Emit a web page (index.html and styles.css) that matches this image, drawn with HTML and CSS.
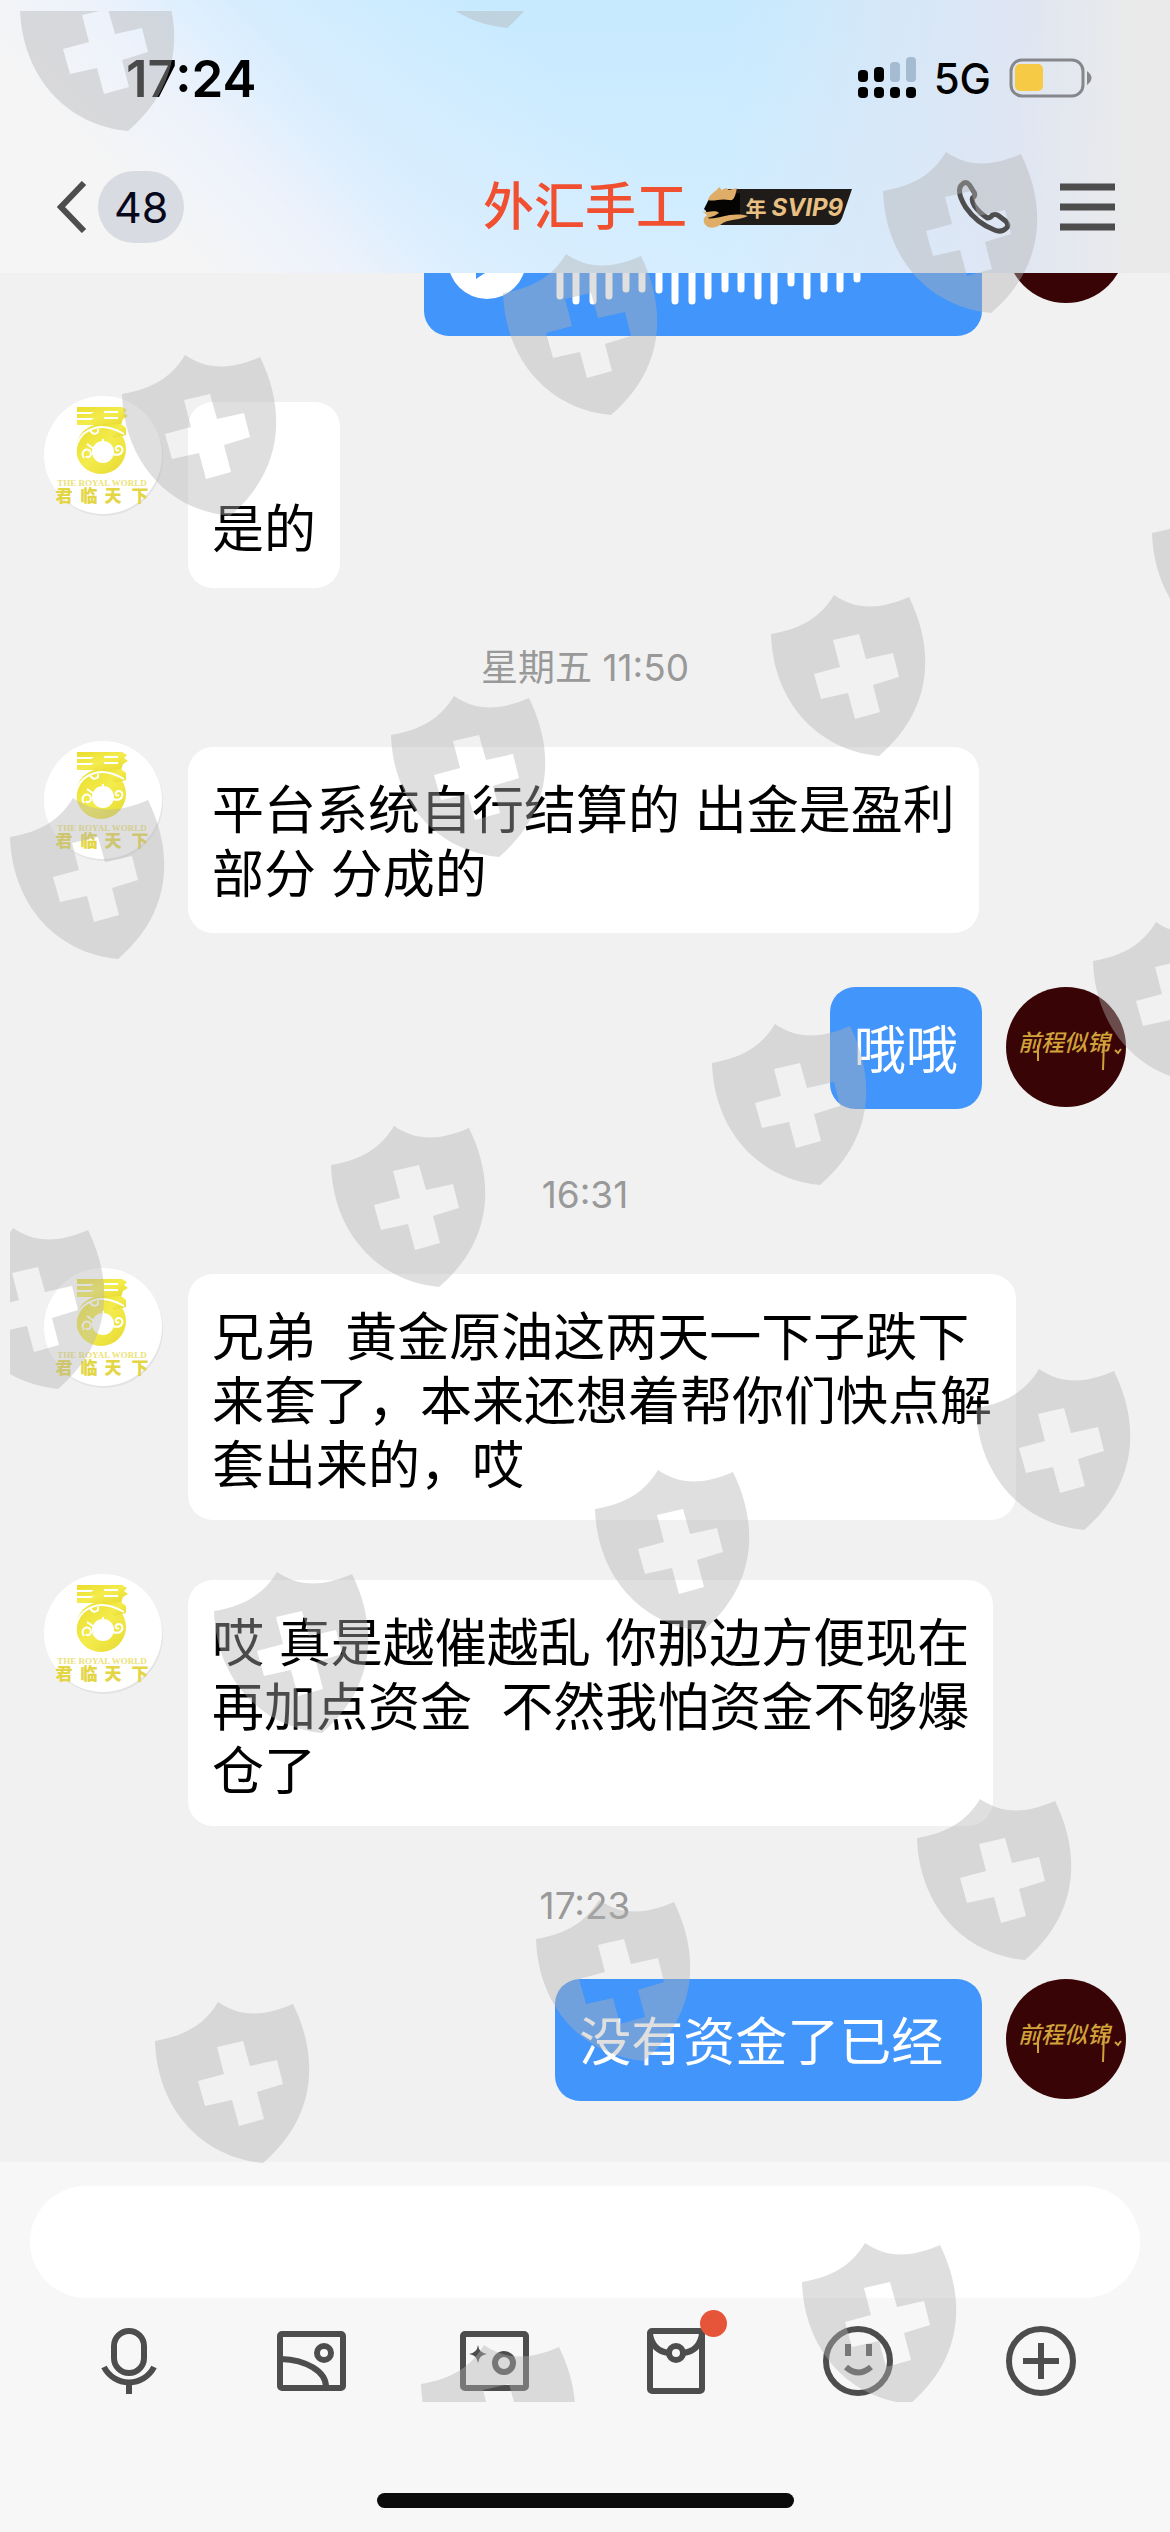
FILE: index.html
```html
<!DOCTYPE html>
<html lang="zh-CN">
<head>
<meta charset="utf-8">
<meta name="viewport" content="width=device-width, initial-scale=1">
<title>外汇手工</title>
<link rel="stylesheet" href="styles.css">
</head>
<body>
<svg class="defs" aria-hidden="true">
  <defs>
    <linearGradient id="gold" x1="0" y1="0" x2="1" y2="1">
      <stop offset="0" stop-color="#e9dc2c"/>
      <stop offset=".5" stop-color="#f4ec4c"/>
      <stop offset="1" stop-color="#e6d931"/>
    </linearGradient>
    <symbol id="shield" viewBox="0 0 156 162">
      <path fill-rule="evenodd" d="M0 39C30 34 50 22 63 0C85 15 108 15 138 2C164 55 162 115 108 161C45 155 2 105 0 39ZM62 45L88 39L95 64L122 58L128 82L102 90L109 117L84 124L77 98L50 104L43 79L69 72Z"/>
    </symbol>
    <symbol id="avatar-peer" viewBox="0 0 120 120">
      <circle cx="60" cy="61" r="59" fill="#e4e4e4"/>
      <circle cx="59" cy="59" r="59" fill="#fff"/>
      <g fill="url(#gold)">
        <path d="M33 11H78L83 14L80 17L84 20L79 23L77 29H33V24H47L50 22H33V18H47L50 16H33Z"/>
        <circle cx="57" cy="53" r="25"/>
        <path d="M58 28H77L82 32V39L70 42Z"/>
      </g>
      <path d="M60 16H74M60 22H74" stroke="#fff" stroke-width="2"/>
      <circle cx="59" cy="56" r="11" fill="#fff"/>
      <path d="M59 43V48M33 66C29 52 34 38 48 33C57 29 68 31 80 38M40 62C36 56 42 51 46 55C49 60 43 63 42 60M69 58C80 62 81 49 74 50C70 52 72 56 75 54M46 34C49 40 55 38 54 33M43 48L50 53" fill="none" stroke="#fff" stroke-width="2"/>
      <text class="peer-latin" x="58" y="90">THE ROYAL WORLD</text>
      <g class="peer-name">
        <text x="20" y="106">君</text><text x="45" y="106">临</text><text x="69" y="106">天</text><text x="96" y="106">下</text>
      </g>
    </symbol>
    <symbol id="avatar-own" viewBox="0 0 120 120">
      <circle cx="60" cy="60" r="60" fill="#390406"/>
      <text class="own-name" x="12" y="64">前程似锦</text>
      <path d="M98 54L97 83M32 58V74M109 63L112 66L115 62" fill="none" stroke="#cfa23a" stroke-width="2"/>
    </symbol>
  </defs>
</svg>

<div class="screen">
  <header class="header">
    <div class="status">
      <span class="clock">17:24</span>
      <div class="status-right">
        <svg class="signal" viewBox="0 0 58 42" aria-hidden="true">
          <g fill="#000"><rect x="0" y="13" width="10" height="12" rx="4"/><rect x="16" y="10" width="10" height="15" rx="4"/><rect x="0" y="30" width="10" height="11" rx="4"/><rect x="16" y="30" width="10" height="11" rx="4"/><rect x="32" y="30" width="10" height="11" rx="4"/><rect x="48" y="30" width="10" height="11" rx="4"/></g>
          <g fill="#a5bbd2"><rect x="32" y="5" width="10" height="20" rx="4"/><rect x="48" y="0" width="10" height="25" rx="4"/></g>
        </svg>
        <span class="network">5G</span>
        <svg class="battery" viewBox="0 0 84 40" aria-hidden="true">
          <rect x="2" y="2" width="72" height="36" rx="11" fill="none" stroke="#85878c" stroke-width="3"/>
          <rect x="6" y="6" width="28" height="27" rx="5" fill="#f7ca45"/>
          <path d="M78 13Q87 20 78 27Z" fill="#85878c"/>
        </svg>
      </div>
    </div>
    <nav class="nav">
      <button class="back" type="button" aria-label="返回">
        <svg class="chevron" viewBox="0 0 30 52" aria-hidden="true"><path d="M27 2L4 26L27 50" fill="none" stroke="#4d4d4d" stroke-width="6"/></svg>
        <span class="unread">48</span>
      </button>
      <h1 class="title">外汇手工</h1>
      <div class="nav-right">
        <div class="vip">
          <svg class="vip-plate" viewBox="0 0 150 41" aria-hidden="true">
            <path d="M22 2H150L140 31Q137 38 131 38H8L4 24Z" fill="#1e1b19"/>
            <path d="M8 10L38 6V30L12 32L2 22Z" fill="#050403"/>
            <path d="M6 13C8 6 14 5 17 0L20 3L24 1L27 3L35 1C33 10 32 14 27 13C18 11 12 15 6 13ZM0 24C7 27 12 22 17 26L12 29L5 31C14 34 28 24 46 29C36 34 27 31 18 38C9 44 0 39 2 31L5 28Z" fill="#e0ad68"/>
          </svg>
          <span class="vip-text"><small>年</small>SVIP9</span>
        </div>
        <div class="actions">
          <button type="button" aria-label="语音通话"><svg class="phone" viewBox="0 0 54 54" aria-hidden="true"><path d="M5 5Q9 0 13 5L18 13Q19 16 16 18Q15 21 18 26Q24 34 31 38Q34 38 36 35Q38 34 41 35L49 41Q53 45 50 48Q45 53 38 50Q20 43 9 27Q3 17 3 11Q3 7 5 5Z" fill="none" stroke="#4d4d4d" stroke-width="5"/></svg></button>
          <button type="button" aria-label="菜单"><svg class="menu" viewBox="0 0 55 54" aria-hidden="true"><path d="M0 7H55M0 27H55M0 47H55" stroke="#4d4d4d" stroke-width="7"/></svg></button>
        </div>
      </div>
    </nav>
  </header>

  <main class="chat">
    <div class="messages">
      <div class="row own">
        <div class="bubble voice">
          <svg class="play" viewBox="0 0 78 78" aria-hidden="true"><circle cx="39" cy="39" r="39" fill="#fff"/><path d="M28 18V58L58 38Z" fill="#4295fa"/></svg>
          <svg class="wave" viewBox="0 0 306 92" aria-hidden="true"><path d="M4 10V82M20 5V87M37 5V87M53 10V82M70 17V75M86 17V75M103 16V76M119 5V87M136 5V87M152 10V82M169 17V75M185 17V75M202 10V82M218 5V87M235 23V69M251 10V82M268 17V75M284 17V75M301 27V65" stroke="#fff" stroke-width="7" stroke-linecap="round"/></svg>
        </div>
        <svg class="avatar" aria-label="我的头像"><use href="#avatar-own"/></svg>
      </div>
      <div class="row">
        <svg class="avatar" aria-label="对方头像"><use href="#avatar-peer"/></svg>
        <p class="bubble"><br>是的</p>
      </div>
      <time class="time">星期五 11:50</time>
      <div class="row">
        <svg class="avatar" aria-label="对方头像"><use href="#avatar-peer"/></svg>
        <p class="bubble">平台系统自行结算的 出金是盈利<br>部分 分成的</p>
      </div>
      <div class="row own">
        <p class="bubble">哦哦</p>
        <svg class="avatar" aria-label="我的头像"><use href="#avatar-own"/></svg>
      </div>
      <time class="time">16:31</time>
      <div class="row">
        <svg class="avatar" aria-label="对方头像"><use href="#avatar-peer"/></svg>
        <p class="bubble long">兄弟  黄金原油这两天一下子跌下<br>来套了，本来还想着帮你们快点解<br>套出来的，哎</p>
      </div>
      <div class="row">
        <svg class="avatar" aria-label="对方头像"><use href="#avatar-peer"/></svg>
        <p class="bubble long">哎 真是越催越乱 你那边方便现在<br>再加点资金  不然我怕资金不够爆<br>仓了</p>
      </div>
      <time class="time">17:23</time>
      <div class="row own">
        <p class="bubble">没有资金了已经 </p>
        <svg class="avatar" aria-label="我的头像"><use href="#avatar-own"/></svg>
      </div>
    </div>
  </main>

  <form class="composer">
    <input class="field" type="text" aria-label="输入消息">
    <div class="tools">
      <button type="button" aria-label="语音"><svg viewBox="0 0 72 72"><rect x="21" y="6" width="30" height="42" rx="15"/><path d="M11 42A28 28 0 0 0 61 42M36 58V69"/></svg></button>
      <button type="button" aria-label="图片"><svg viewBox="0 0 72 72"><rect x="5" y="9" width="63" height="54" rx="2"/><circle cx="49" cy="28" r="7"/><path d="M6 34C31 35 51 46 51 62"/></svg></button>
      <button type="button" aria-label="拍照"><svg viewBox="0 0 72 72"><rect x="5" y="9" width="63" height="54" rx="2"/><circle cx="46" cy="38" r="9"/><path class="solid" d="M20 20Q21 28 29 29Q21 30 20 38Q19 30 11 29Q19 28 20 20Z"/></svg></button>
      <button type="button" aria-label="红包"><svg viewBox="0 0 72 72"><rect x="10" y="6" width="52" height="60" rx="2"/><circle cx="36" cy="28" r="7"/><path d="M10 9C12 22 20 27 29 28M62 9C60 22 52 27 43 28"/></svg><span class="dot"></span></button>
      <button type="button" aria-label="表情"><svg viewBox="0 0 72 72"><circle cx="36" cy="36" r="32"/><path d="M26 19V31M47 19V31M24 42Q36 53 49 42"/></svg></button>
      <button type="button" aria-label="更多"><svg viewBox="0 0 72 72"><circle cx="36" cy="36" r="32"/><path d="M18 36H54M36 18V54"/></svg></button>
    </div>
    <div class="home-bar"></div>
  </form>

  <svg class="shields" aria-hidden="true">
    <g transform="translate(-10 -11)">
      <use href="#shield" width="156" height="162" x="20" y="-30"/>
      <use href="#shield" width="156" height="162" x="399" y="-133"/>
      <use href="#shield" width="156" height="162" x="883" y="152"/>
      <use href="#shield" width="156" height="162" x="503" y="254"/>
      <use href="#shield" width="156" height="162" x="122" y="355"/>
      <use href="#shield" width="156" height="162" x="1152" y="494"/>
      <use href="#shield" width="156" height="162" x="771" y="595"/>
      <use href="#shield" width="156" height="162" x="391" y="696"/>
      <use href="#shield" width="156" height="162" x="10" y="798"/>
      <use href="#shield" width="156" height="162" x="1093" y="922"/>
      <use href="#shield" width="156" height="162" x="712" y="1024"/>
      <use href="#shield" width="156" height="162" x="331" y="1126"/>
      <use href="#shield" width="156" height="162" x="-50" y="1228"/>
      <use href="#shield" width="156" height="162" x="976" y="1369"/>
      <use href="#shield" width="156" height="162" x="595" y="1470"/>
      <use href="#shield" width="156" height="162" x="214" y="1572"/>
      <use href="#shield" width="156" height="162" x="917" y="1799"/>
      <use href="#shield" width="156" height="162" x="536" y="1900"/>
      <use href="#shield" width="156" height="162" x="155" y="2002"/>
      <use href="#shield" width="156" height="162" x="802" y="2243"/>
      <use href="#shield" width="156" height="162" x="421" y="2345"/>
    </g>
  </svg>
</div>
</body>
</html>
```
FILE: styles.css
```css
* {
  box-sizing: border-box;
}

body {
  margin: 0;
  background: #f1f1f1;
  color: #000;
  font-family: Inter, "Noto Sans CJK SC", sans-serif;
}

button {
  display: block;
  padding: 0;
  border: 0;
  background: none;
  font: inherit;
}

svg {
  display: block;
  flex: none;
}

.defs {
  position: absolute;
  width: 0;
  height: 0;
}

.screen {
  position: relative;
  display: flex;
  flex-direction: column;
  min-height: 100vh;
  overflow: hidden;
}

/* Header */

.header {
  position: relative;
  padding-bottom: 15px;
  background:
    linear-gradient(90deg, rgba(233, 233, 235, 0) 62%, rgba(224, 229, 242, 0.9) 86%, #eaeaea 97%),
    linear-gradient(47deg, #f5f5f5 14%, #edf2fb 24%, rgba(219, 238, 254, 0.8) 34%, rgba(210, 236, 255, 0) 52%),
    linear-gradient(180deg, #c7eaff, #d4edff);
}

.status {
  display: flex;
  align-items: center;
  justify-content: space-between;
  height: 156px;
  padding: 0 77px 0 126px;
}

.clock {
  font-size: 51px;
  font-weight: 600;
}

.status-right {
  display: flex;
  align-items: center;
  gap: 18px;
}

.signal {
  width: 58px;
  height: 42px;
}

.network {
  font-size: 42px;
  font-weight: 500;
}

.battery {
  width: 84px;
  height: 40px;
}

.nav {
  display: grid;
  grid-template-columns: 1fr auto 1fr;
  align-items: center;
  height: 102px;
  padding: 0 55px;
}

.back {
  display: flex;
  align-items: center;
  gap: 11px;
  justify-self: start;
  padding-left: 2px;
}

.chevron {
  width: 30px;
  height: 52px;
}

.unread {
  padding: 0 16px;
  border-radius: 36px;
  background: #d8dbe1;
  color: #08081c;
  font-size: 43px;
  line-height: 72px;
}

.title {
  margin: 0;
  color: #f0502f;
  font-size: 51px;
  font-weight: 500;
  line-height: 72px;
}

.nav-right,
.actions {
  display: flex;
  align-items: center;
  justify-content: space-between;
}

.actions {
  gap: 49px;
}

.vip {
  position: relative;
  margin-left: 15px;
}

.vip-plate {
  width: 150px;
  height: 41px;
}

.vip-text {
  position: absolute;
  inset: 0 9px 0 auto;
  display: flex;
  align-items: center;
  gap: 5px;
  color: #e8c083;
  font-size: 24px;
  font-style: italic;
  font-weight: 700;
}

.vip-text small {
  font-size: 21px;
  font-style: normal;
}

.phone,
.menu {
  width: 55px;
  height: 54px;
}

/* Messages */

.chat {
  flex: 1;
  overflow: hidden;
}

.messages {
  display: flex;
  flex-direction: column;
  gap: 54px;
  margin-top: -90px;
  padding: 0 44px 54px;
}

.row {
  display: flex;
  align-items: flex-start;
  gap: 24px;
}

.row.own {
  justify-content: flex-end;
  margin-bottom: 6px;
}

.avatar {
  width: 120px;
  height: 120px;
}

.bubble {
  margin: 6px 0 0;
  padding: 32px 24px 26px;
  border-radius: 25px;
  background: #fff;
  font-size: 52px;
  line-height: 64px;
  white-space: pre;
}

.bubble.long {
  padding-bottom: 22px;
}

.own .bubble {
  margin-top: 0;
  background: #4295fa;
  color: #fff;
}

.voice {
  display: flex;
  align-items: center;
  gap: 30px;
  width: 558px;
  height: 153px;
  padding: 0 24px;
}

.own .voice {
  padding: 0 24px;
}

.play {
  width: 78px;
  height: 78px;
}

.wave {
  width: 306px;
  height: 92px;
}

.time {
  padding-top: 6px;
  color: #999;
  font-size: 37px;
  line-height: 39px;
  text-align: center;
}

.peer-latin {
  fill: #ece27a;
  font: 700 9px "Liberation Serif", serif;
  text-anchor: middle;
}

.peer-name {
  fill: #e3d544;
  font: 900 17px "Noto Sans CJK SC", sans-serif;
  text-anchor: middle;
}

.own-name {
  fill: #cfa23a;
  font: italic 500 23px "Noto Sans CJK SC", sans-serif;
}

/* Composer */

.composer {
  padding: 24px 30px;
  background: #f7f7f7;
}

.field {
  display: block;
  width: 100%;
  height: 112px;
  padding: 0 48px;
  border: 0;
  border-radius: 56px;
  background: #fff;
  font: inherit;
  font-size: 52px;
}

.tools {
  display: grid;
  grid-template-columns: repeat(6, 1fr);
  justify-items: center;
  margin: 27px 8px 96px;
}

.tools button {
  position: relative;
}

.tools svg {
  width: 72px;
  height: 72px;
  fill: none;
  stroke: #4d4d4d;
  stroke-width: 6;
}

.tools .solid {
  fill: #4d4d4d;
  stroke: none;
}

.dot {
  position: absolute;
  top: -15px;
  right: -15px;
  width: 27px;
  height: 27px;
  border-radius: 50%;
  background: #e6553a;
}

.home-bar {
  width: 417px;
  height: 15px;
  margin: 0 auto;
  border-radius: 8px;
  background: #0b0b0b;
}

/* Shield pattern laid over the whole screen */

.shields {
  position: absolute;
  top: 11px;
  left: 10px;
  width: calc(100% - 10px);
  height: calc(100% - 141px);
  overflow: hidden;
  fill: rgba(178, 178, 178, 0.416);
  pointer-events: none;
}
```
